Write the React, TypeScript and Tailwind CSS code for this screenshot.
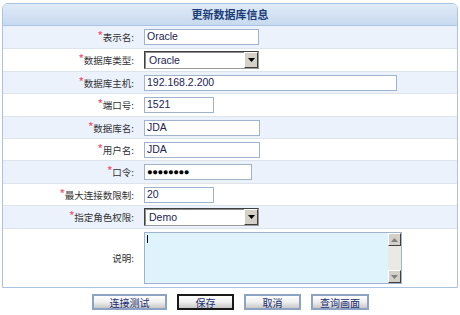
import type { ReactNode } from "react";

const cjk = "font-['Noto_Sans_CJK_SC','Noto_Sans',sans-serif]";
const latin = "font-['Liberation_Sans','Noto_Sans_CJK_SC',sans-serif]";

function TextBox({ w, value, dots }: { w: string; value: string; dots?: boolean }) {
  return (
    <div
      className={`box-border flex h-[16px] items-center border border-[#9fb3cc] bg-white pl-[2px] ${w} ${latin} ${
        dots ? "text-[9.5px] tracking-[-0.5px] text-black" : "text-[10.5px] text-[#1d2350]"
      }`}
    >
      {value}
    </div>
  );
}

function SelectBox({ value }: { value: string }) {
  return (
    <div className="box-border flex h-[18px] w-[115px] border border-t-[#404040] border-l-[#404040] border-r-[#9a9a9a] border-b-[#9a9a9a] bg-white">
      <div className={`flex flex-1 items-center border-t border-l border-[#8a8a8a] pl-[3px] text-[10.5px] text-[#1d2350] ${latin}`}>
        {value}
      </div>
      <div className="box-border flex w-[14px] items-center justify-center border border-t-white border-l-white border-r-[#404040] border-b-[#404040] bg-[#d4d0c8]">
        <svg width="7" height="4" viewBox="0 0 7 4">
          <path d="M0 0h7L3.5 4z" fill="#000" />
        </svg>
      </div>
    </div>
  );
}

function ScrollArrow({ up }: { up?: boolean }) {
  return (
    <div className="box-border flex h-[13px] w-[13px] items-center justify-center border border-t-white border-l-white border-r-[#404040] border-b-[#404040] bg-[#d4d0c8]">
      <svg width="7" height="4" viewBox="0 0 7 4">
        <path d={up ? "M0 4h7L3.5 0z" : "M0 0h7L3.5 4z"} fill="#808080" />
      </svg>
    </div>
  );
}

function TextArea() {
  return (
    <div className="box-border flex h-[52px] w-[258px] border border-[#9fb3cc] bg-[#dff3fc]">
      <div className="flex-1 pl-[2px] pt-[2px]">
        <div className="h-[8px] w-[1px] bg-black" />
      </div>
      <div className="flex w-[13px] flex-col justify-between bg-[#ebe9e3]">
        <ScrollArrow up />
        <ScrollArrow />
      </div>
    </div>
  );
}

type Row = { label: string; req: boolean; h: string; field: ReactNode };

const rows: Row[] = [
  { label: "表示名", req: true, h: "h-[23px]", field: <TextBox w="w-[115px]" value="Oracle" /> },
  { label: "数据库类型", req: true, h: "h-[23px]", field: <SelectBox value="Oracle" /> },
  { label: "数据库主机", req: true, h: "h-[22px]", field: <TextBox w="w-[253px]" value="192.168.2.200" /> },
  { label: "端口号", req: true, h: "h-[23px]", field: <TextBox w="w-[70px]" value="1521" /> },
  { label: "数据库名", req: true, h: "h-[22px]", field: <TextBox w="w-[116px]" value="JDA" /> },
  { label: "用户名", req: true, h: "h-[22px]", field: <TextBox w="w-[116px]" value="JDA" /> },
  { label: "口令", req: true, h: "h-[23px]", field: <TextBox w="w-[108px]" value="●●●●●●●●" dots /> },
  { label: "最大连接数限制", req: true, h: "h-[22px]", field: <TextBox w="w-[70px]" value="20" /> },
  { label: "指定角色权限", req: true, h: "h-[23px]", field: <SelectBox value="Demo" /> },
];

function Label({ label, req }: { label: string; req: boolean }) {
  return (
    <div className={`w-[133px] pr-[2px] text-right text-[9.5px] text-[#333] ${cjk}`}>
      {req && <span className="relative -top-[2px] text-[10px] font-bold text-[#f0607a]">*</span>}
      {label}:
    </div>
  );
}

function Btn({ children, w, focus }: { children: ReactNode; w: string; focus?: boolean }) {
  return (
    <button
      className={`box-border flex h-[16px] items-center justify-center bg-gradient-to-b from-white via-[#f0f0f0] to-[#c8c8c8] text-[10px] text-[#1c2f72] ${w} ${cjk} ${
        focus ? "border-2 border-[#1a1a1a]" : "border-2 border-[#8ea3c3]"
      }`}
    >
      {children}
    </button>
  );
}

export default function App() {
  return (
    <div className="h-[315px] w-[460px] bg-white pt-[3px]">
      <div className="ml-[2px] w-[456px] overflow-hidden rounded-t-[6px] border border-[#a9c3e3]">
        <div className="flex h-[22px] items-center justify-center border-b border-[#a9c3e3] bg-gradient-to-b from-[#dfeaf7] to-[#c8daef]">
          <span className={`text-[11px] font-bold text-[#1c3d78] ${cjk}`}>更新数据库信息</span>
        </div>
        {rows.map((r, i) => (
          <div
            key={r.label}
            className={`box-border flex items-center border-b border-[#dde4ec] ${r.h} ${i % 2 === 0 ? "bg-[#ebf2fc]" : "bg-white"}`}
          >
            <Label label={r.label} req={r.req} />
            <div className="pl-[8px]">{r.field}</div>
          </div>
        ))}
        <div className="flex h-[58px] bg-white">
          <div className="flex items-center">
            <div className={`w-[133px] pr-[2px] text-right text-[9.5px] text-[#333] ${cjk}`}>说明:</div>
          </div>
          <div className="pl-[8px] pt-[3px]">
            <TextArea />
          </div>
        </div>
      </div>
      <div className="mt-[6px] flex justify-center gap-[10px] pl-[1px]">
        <Btn w="w-[75px]">连接测试</Btn>
        <Btn w="w-[57px]" focus>
          保存
        </Btn>
        <Btn w="w-[57px]">取消</Btn>
        <Btn w="w-[58px]">查询画面</Btn>
      </div>
    </div>
  );
}
